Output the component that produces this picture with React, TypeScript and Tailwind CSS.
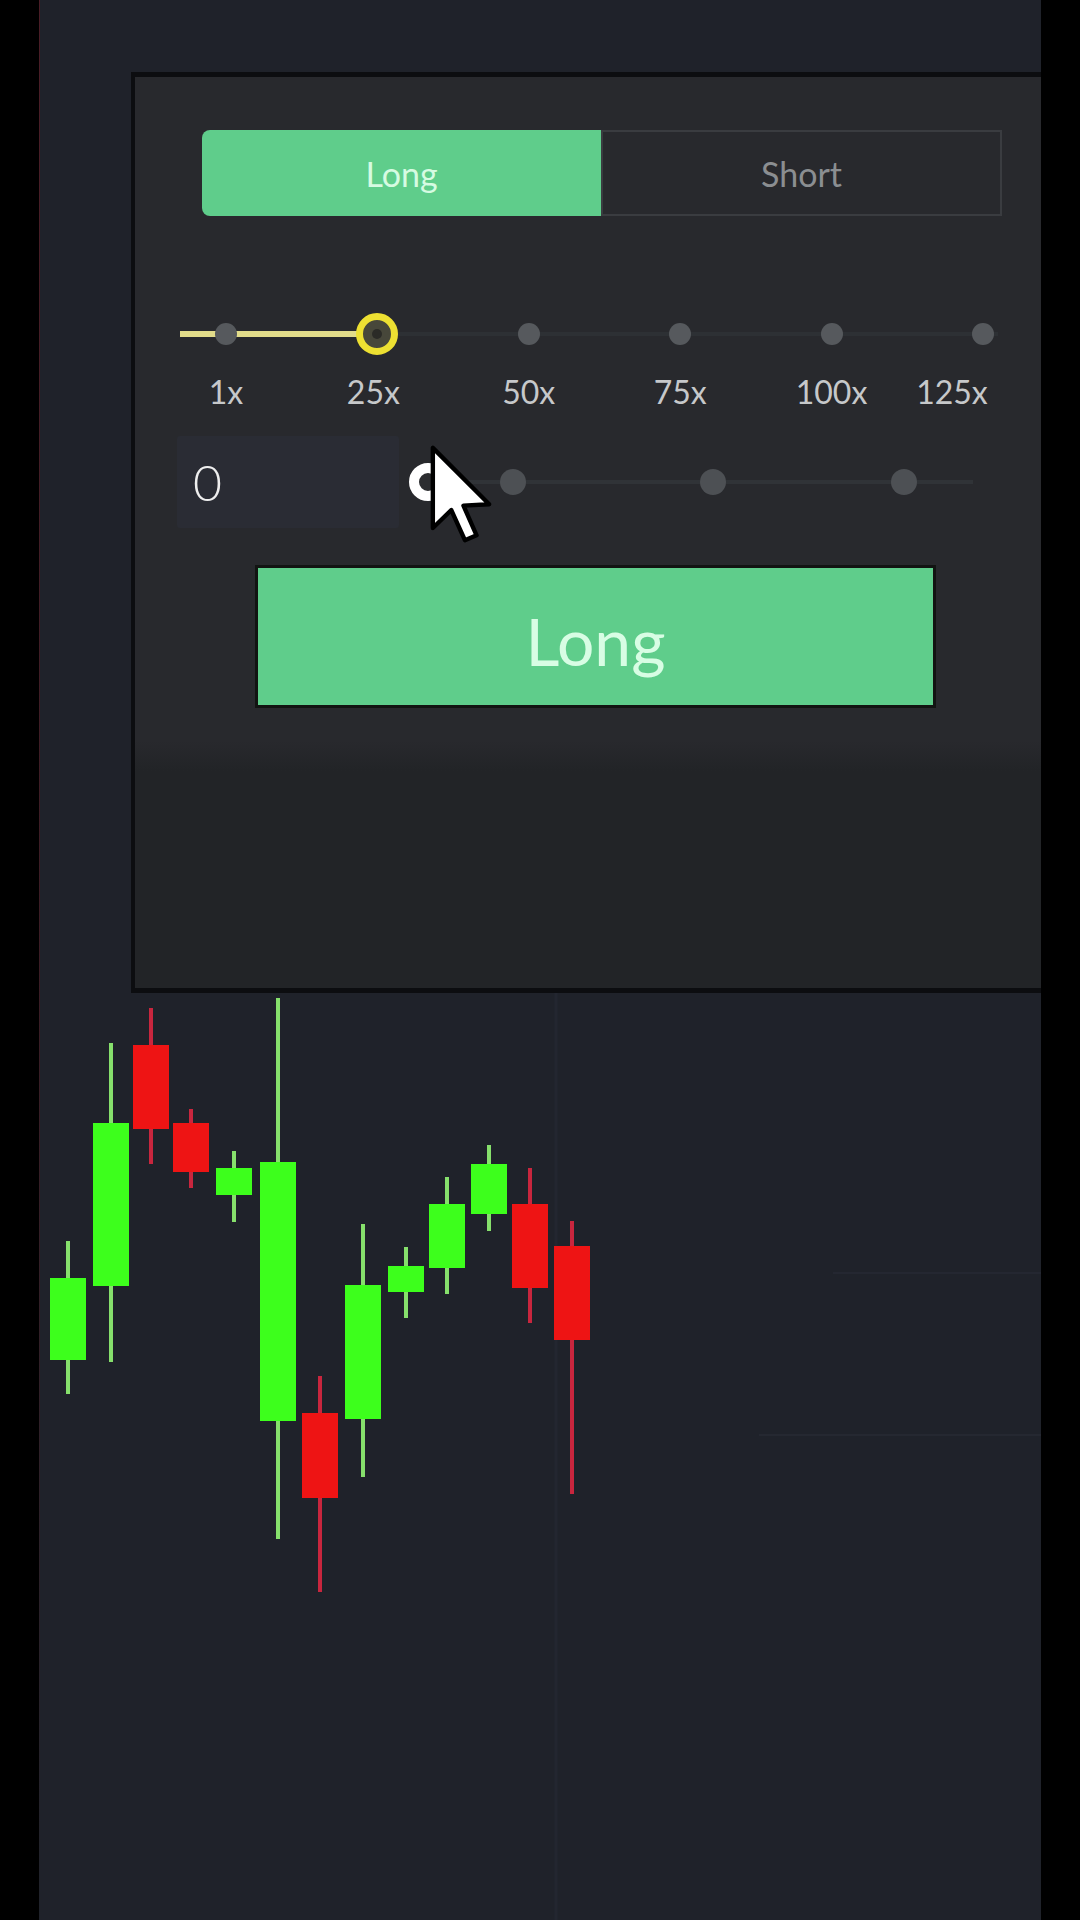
import React from "react";

// candle data in page coordinates: x = centre, bt/bb = body top/bottom, wt/wb = wick top/bottom
const candles = [
  { x: 68, bt: 1278, bb: 1360, wt: 1241, wb: 1394, up: true },
  { x: 111, bt: 1123, bb: 1286, wt: 1043, wb: 1362, up: true },
  { x: 151, bt: 1045, bb: 1129, wt: 1008, wb: 1164, up: false },
  { x: 191, bt: 1123, bb: 1172, wt: 1109, wb: 1188, up: false },
  { x: 234, bt: 1168, bb: 1195, wt: 1151, wb: 1222, up: true },
  { x: 278, bt: 1162, bb: 1421, wt: 998, wb: 1539, up: true },
  { x: 320, bt: 1413, bb: 1498, wt: 1376, wb: 1592, up: false },
  { x: 363, bt: 1285, bb: 1419, wt: 1224, wb: 1477, up: true },
  { x: 406, bt: 1266, bb: 1292, wt: 1247, wb: 1318, up: true },
  { x: 447, bt: 1204, bb: 1268, wt: 1177, wb: 1294, up: true },
  { x: 489, bt: 1164, bb: 1214, wt: 1145, wb: 1231, up: true },
  { x: 530, bt: 1204, bb: 1288, wt: 1168, wb: 1323, up: false },
  { x: 572, bt: 1246, bb: 1340, wt: 1221, wb: 1494, up: false },
];

const leverage = ["1x", "25x", "50x", "75x", "100x", "125x"];

function Cursor() {
  return (
    <svg
      width="68"
      height="102"
      viewBox="0 0 14 21"
      className="absolute left-[293px] top-[366px] z-20"
    >
      <path
        d="M1 1 L1 17.5 L4.8 13.8 L7.6 20 L10 19 L7.3 12.9 L12.6 12.6 Z"
        fill="#ffffff"
        stroke="#000000"
        strokeWidth="0.9"
        strokeLinejoin="round"
      />
    </svg>
  );
}

export default function App() {
  return (
    <div
      className="flex h-[1920px] w-[1080px] overflow-hidden bg-black"
      style={{ fontFamily: "Lato, 'Open Sans', sans-serif" }}
    >
      <div className="w-[39px] shrink-0 bg-black" />
      <div className="w-px shrink-0 bg-gradient-to-b from-[#4a1d26] via-[#3a1c24] to-[#1f222a]" />

      {/* main chart area */}
      <div className="flex w-[1001px] shrink-0 flex-col bg-[#1f222a] pt-[72px]">
        {/* order panel */}
        <div className="relative ml-[91px] flex h-[921px] flex-col border-t-[5px] border-b-[5px] border-l-4 border-[#0c0d10] bg-[#222427]">
          <div className="flex h-[664px] flex-col bg-[#28292d]">
            {/* long / short toggle */}
            <div className="ml-[67px] mt-[53px] flex h-[86px] w-[800px]">
              <div className="flex w-[399px] items-center justify-center rounded-l-[8px] bg-[#5fcd8b] text-[34px] text-[#d6fbe2]">
                Long
              </div>
              <div className="flex flex-1 items-center justify-center border-2 border-[#3a3c40] text-[34px] text-[#8b8e91]">
                Short
              </div>
            </div>

            {/* leverage slider */}
            <div className="relative ml-[45px] mt-[96px] flex h-[44px] w-[818px] items-center">
              <div className="absolute left-0 right-0 top-[20px] h-[4px] bg-[#2d3034]" />
              <div className="absolute left-0 top-[19px] h-[6px] w-[196px] bg-[#e2dc8a]" />
              <div className="relative ml-[35px] flex w-[779px] justify-between">
                {leverage.map((l, i) => (
                  <div key={l} className="flex h-[22px] w-[22px] items-center justify-center">
                    {i === 1 ? (
                      <div className="flex h-[42px] w-[42px] shrink-0 items-center justify-center rounded-full border-[7px] border-[#ede032] bg-[#47473a]">
                        <div className="h-[10px] w-[10px] rounded-full bg-[#2b2b27]" />
                      </div>
                    ) : (
                      <div className="h-[22px] w-[22px] rounded-full bg-[#56595d]" />
                    )}
                  </div>
                ))}
              </div>
            </div>
            <div className="ml-[80px] mt-[18px] flex w-[779px] justify-between text-[32px] leading-[36px] text-[#c6c8ca]">
              {leverage.map((l, i) => (
                <div key={l} className="flex w-[22px] justify-center">
                  <span
                    className={
                      i === 5
                        ? "-translate-x-[31px] whitespace-nowrap"
                        : i === 1
                          ? "-translate-x-[4px] whitespace-nowrap"
                          : "whitespace-nowrap"
                    }
                  >
                    {l}
                  </span>
                </div>
              ))}
            </div>

            {/* amount input + slider */}
            <div className="ml-[42px] mt-[26px] flex items-center">
              <div className="flex h-[92px] w-[222px] items-center rounded-[3px] bg-[#2a2c34] pl-[16px] text-[50px] font-light text-[#eeeeee]">
                0
              </div>
              <div className="relative ml-[10px] flex h-[40px] w-[564px] items-center">
                <div className="absolute left-0 right-0 top-[18px] h-[4px] bg-[#303337]" />
                <div className="relative flex h-[38px] w-[38px] items-center justify-center rounded-full border-[10px] border-white bg-[#2c2d30]" />
                <div className="relative ml-[53px] h-[26px] w-[26px] rounded-full bg-[#4d5054]" />
                <div className="relative ml-[174px] h-[26px] w-[26px] rounded-full bg-[#4d5054]" />
                <div className="relative ml-[165px] h-[26px] w-[26px] rounded-full bg-[#4d5054]" />
              </div>
            </div>

            {/* submit */}
            <button className="ml-[123px] mt-[40px] flex h-[137px] w-[675px] items-center justify-center bg-[#5fcd8b] pt-[8px] text-[66px] text-[#d8fde4] shadow-[0_0_0_3px_#121412]">
              Long
            </button>
          </div>
          <div className="h-[30px] bg-gradient-to-b from-[#28292d] to-[#222427]" />

          <Cursor />
        </div>

        {/* candles */}
        <svg width="1001" height="927" viewBox="40 993 1001 927" className="block">
          <line x1="556" y1="993" x2="556" y2="1920" stroke="#232630" strokeWidth="3" />
          <line x1="833" y1="1273" x2="1041" y2="1273" stroke="#242731" strokeWidth="2" />
          <line x1="759" y1="1435" x2="1041" y2="1435" stroke="#252831" strokeWidth="2" />
          {candles.map((c, i) => (
            <g key={i}>
              <rect
                x={c.x - 2}
                y={c.wt}
                width="4"
                height={c.wb - c.wt}
                fill={c.up ? "#86e06c" : "#c8263e"}
              />
              <rect
                x={c.x - 18}
                y={c.bt}
                width="36"
                height={c.bb - c.bt}
                fill={c.up ? "#3dff1c" : "#ee1414"}
              />
            </g>
          ))}
        </svg>
      </div>

      <div className="w-[39px] shrink-0 bg-black" />
    </div>
  );
}
